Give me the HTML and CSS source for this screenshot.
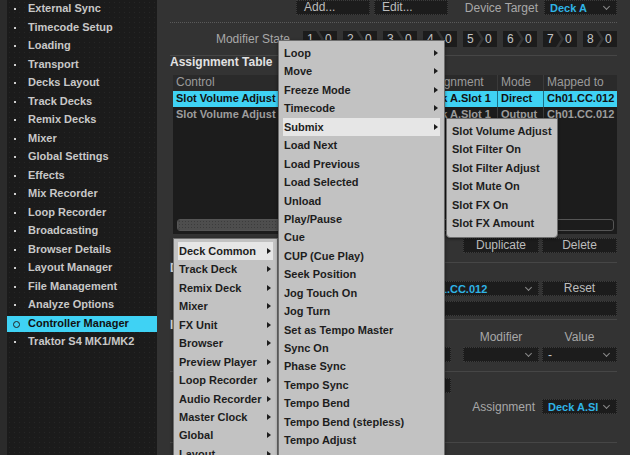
FILE: index.html
```html
<!DOCTYPE html>
<html>
<head>
    <title>Preferences - Controller Manager</title>
    <link rel="stylesheet" href="styles.css">
</head>
<body>
    <div class="app">
        <div class="edge"></div>
        <nav class="sidebar">
            <ul>
                <li>External Sync</li>
                <li>Timecode Setup</li>
                <li>Loading</li>
                <li>Transport</li>
                <li>Decks Layout</li>
                <li>Track Decks</li>
                <li>Remix Decks</li>
                <li>Mixer</li>
                <li>Global Settings</li>
                <li>Effects</li>
                <li>Mix Recorder</li>
                <li>Loop Recorder</li>
                <li>Broadcasting</li>
                <li>Browser Details</li>
                <li>Layout Manager</li>
                <li>File Management</li>
                <li>Analyze Options</li>
                <li class="active">Controller Manager</li>
                <li>Traktor S4 MK1/MK2</li>
            </ul>
        </nav>

        <main class="panel">
            <div class="top-row">
                <button class="btn btn-top">Add...</button>
                <button class="btn btn-top">Edit...</button>
                <span class="field-label device-label">Device Target</span>
                <div class="dropdown col-b"><span class="cyan">Deck A</span><span class="chev"></span></div>
            </div>
            <div class="dotted"></div>

            <div class="mod-row">
                <span class="field-label mod-label">Modifier State</span>
                <div class="mod-boxes">
                    <div class="mod"><span class="mod-num">1</span><span class="mod-val">0</span></div>
                    <div class="mod"><span class="mod-num">2</span><span class="mod-val">0</span></div>
                    <div class="mod"><span class="mod-num">3</span><span class="mod-val">0</span></div>
                    <div class="mod"><span class="mod-num">4</span><span class="mod-val">0</span></div>
                    <div class="mod"><span class="mod-num">5</span><span class="mod-val">0</span></div>
                    <div class="mod"><span class="mod-num">6</span><span class="mod-val">0</span></div>
                    <div class="mod"><span class="mod-num">7</span><span class="mod-val">0</span></div>
                    <div class="mod"><span class="mod-num">8</span><span class="mod-val">0</span></div>
                </div>
            </div>
            <div class="rule"></div>

            <h4 class="section-title">Assignment Table</h4>
            <div class="table">
                <div class="tr th">
                    <span class="c-control">Control</span>
                    <span class="c-assign">Assignment</span>
                    <span class="c-mode">Mode</span>
                    <span class="c-map">Mapped to</span>
                </div>
                <div class="tr selected">
                    <span class="c-control">Slot Volume Adjust</span>
                    <span class="c-assign">Deck A.Slot 1</span>
                    <span class="c-mode">Direct</span>
                    <span class="c-map">Ch01.CC.012</span>
                </div>
                <div class="tr">
                    <span class="c-control">Slot Volume Adjust</span>
                    <span class="c-assign">Deck A.Slot 1</span>
                    <span class="c-mode">Output</span>
                    <span class="c-map">Ch01.CC.012</span>
                </div>
                <div class="table-fill"></div>
                <div class="scrollbar"><div class="thumb"></div></div>
            </div>

            <div class="right-row btn-row">
                <button class="btn col-a">Duplicate</button>
                <button class="btn col-b">Delete</button>
            </div>
            <div class="rule rule-2"></div>

            <div class="sub-title">D</div>
            <div class="right-row learn-row">
                <div class="dropdown learn-dd"><span class="cyan">Ch01.CC.012</span><span class="chev"></span></div>
                <button class="btn col-b">Reset</button>
            </div>
            <div class="right-row">
                <div class="dark-bar"></div>
            </div>
            <div class="rule rule-3"></div>

            <div class="sub-title sub-title-2">I</div>
            <div class="right-row label-row">
                <span class="col-a center">Modifier</span>
                <span class="col-b center">Value</span>
            </div>
            <div class="right-row dd-row">
                <div class="dropdown part-box"><span class="chev"></span></div>
                <div class="dropdown col-a"><span></span><span class="chev"></span></div>
                <div class="dropdown col-b"><span class="dash">-</span><span class="chev"></span></div>
            </div>
            <div class="rule rule-4"></div>

            <div class="right-row small-row">
                <div class="dropdown part-box"></div>
            </div>
            <div class="right-row assign-row">
                <div class="dropdown part-box"></div>
                <span class="field-label assign-label">Assignment</span>
                <div class="dropdown col-b"><span class="cyan">Deck A.Sl</span><span class="chev"></span></div>
            </div>
            <div class="rule rule-5"></div>
        </main>
    </div>

    <!-- context menus opened over the panel -->
    <ul class="menu menu-class">
        <li class="hl arrow">Deck Common</li>
        <li class="arrow">Track Deck</li>
        <li class="arrow">Remix Deck</li>
        <li class="arrow">Mixer</li>
        <li class="arrow">FX Unit</li>
        <li class="arrow">Browser</li>
        <li class="arrow">Preview Player</li>
        <li class="arrow">Loop Recorder</li>
        <li class="arrow">Audio Recorder</li>
        <li class="arrow">Master Clock</li>
        <li class="arrow">Global</li>
        <li class="arrow">Layout</li>
    </ul>

    <ul class="menu menu-deck">
        <li class="arrow">Loop</li>
        <li class="arrow">Move</li>
        <li class="arrow">Freeze Mode</li>
        <li class="arrow">Timecode</li>
        <li class="hl arrow">Submix</li>
        <li>Load Next</li>
        <li>Load Previous</li>
        <li>Load Selected</li>
        <li>Unload</li>
        <li>Play/Pause</li>
        <li>Cue</li>
        <li>CUP (Cue Play)</li>
        <li>Seek Position</li>
        <li>Jog Touch On</li>
        <li>Jog Turn</li>
        <li>Set as Tempo Master</li>
        <li>Sync On</li>
        <li>Phase Sync</li>
        <li>Tempo Sync</li>
        <li>Tempo Bend</li>
        <li>Tempo Bend (stepless)</li>
        <li>Tempo Adjust</li>
    </ul>

    <ul class="menu menu-submix">
        <li>Slot Volume Adjust</li>
        <li>Slot Filter On</li>
        <li>Slot Filter Adjust</li>
        <li>Slot Mute On</li>
        <li>Slot FX On</li>
        <li>Slot FX Amount</li>
    </ul>
</body>
</html>
```

FILE: styles.css
```css
:root {
    --edge: #2b2b2b;
    --sidebar: #1b1b1b;
    --panel: #333333;
    --control: #1c1c1c;
    --control-border: #3c3c3c;
    --text: #c8c8c8;
    --label: #a8a8a8;
    --cyan: #3fd2f4;
    --cyan-text: #2fb4e6;
    --menu-bg: #c2c2c2;
    --menu-hl: #e6e6e6;
    --menu-text: #1d1d1d;
}

* {
    box-sizing: border-box;
}

html, body {
    overflow: hidden;
}

body {
    position: relative;
    margin: 0;
    width: 630px;
    height: 455px;
    font-family: 'Liberation Sans', Arial, sans-serif;
    background: var(--panel);
}

ul {
    list-style: none;
    margin: 0;
    padding: 0;
}

button {
    font-family: inherit;
}

.app {
    display: flex;
    height: 455px;
}

.edge {
    width: 7px;
    background: var(--edge);
}

/* Sidebar */
.sidebar {
    width: 150px;
    background-color: var(--sidebar);
    background-image: radial-gradient(#262626 0.6px, transparent 0.7px);
    background-size: 5px 5px;
}

.sidebar li {
    position: relative;
    height: 18.5px;
    line-height: 15.5px;
    padding-left: 21px;
    border-top: 1.5px solid transparent;
    border-bottom: 1.5px solid transparent;
    background-clip: padding-box;
    font-size: 11px;
    font-weight: bold;
    color: var(--text);
    white-space: nowrap;
}

.sidebar li::before {
    content: "";
    position: absolute;
    left: 7px;
    top: 7px;
    width: 2px;
    height: 2px;
    background: #cfcfcf;
}

.sidebar li.active {
    background-color: var(--cyan);
    color: #111;
}

.sidebar li.active::before {
    left: 6px;
    top: 5.5px;
    width: 5px;
    height: 5px;
    border: 1.3px solid #222;
    border-radius: 50%;
    background: transparent;
}

/* Main panel */
.panel {
    flex: 1;
    padding: 0 13px 0 13px;
    background: var(--panel);
    color: var(--text);
}

.btn {
    height: 15px;
    padding: 0 6px;
    border: 1px dotted var(--control-border);
    background: var(--control);
    color: #bdbdbd;
    font-size: 12px;
    line-height: 13px;
    text-align: center;
}

.field-label {
    font-size: 12px;
    color: var(--label);
    white-space: nowrap;
}

.cyan {
    color: var(--cyan-text);
    font-weight: bold;
    font-size: 11px;
}

.dropdown {
    display: flex;
    align-items: center;
    justify-content: space-between;
    height: 15px;
    padding: 0 5px 0 5px;
    border: 1px dotted var(--control-border);
    background: var(--control);
    overflow: hidden;
    white-space: nowrap;
}

.chev {
    flex: none;
    width: 5px;
    height: 5px;
    margin: 0 2px 3px 4px;
    border-right: 1.2px solid #8a8a8a;
    border-bottom: 1.2px solid #8a8a8a;
    transform: rotate(45deg);
}

.col-a {
    width: 76px;
}

.col-b {
    width: 75px;
    margin-left: 3px;
}

.center {
    text-align: center;
}

.top-row {
    display: flex;
    justify-content: flex-end;
    align-items: center;
    height: 15px;
}

.btn-top {
    width: 74px;
    margin-left: 4px;
    text-align: left;
    padding-left: 7px;
}

.device-label {
    width: 92px;
    text-align: right;
    padding-right: 2px;
}

.top-row .dropdown {
    margin-left: 4px;
    width: 73px;
}

.dotted {
    margin-top: 7px;
    border-top: 1px dotted #5a5a5a;
}

.mod-row {
    display: flex;
    align-items: center;
    height: 16px;
    margin-top: 8px;
}

.mod-label {
    width: 120px;
    text-align: right;
}

.mod-boxes {
    display: flex;
    gap: 6px;
    margin-left: 13px;
}

.mod {
    display: flex;
    width: 34px;
    height: 16px;
    font-size: 12px;
    line-height: 16px;
    color: #c4c4c4;
}

.mod-num {
    width: 18px;
    padding-left: 4px;
    background: var(--control);
    clip-path: polygon(0 0, 13px 0, 18px 50%, 13px 100%, 0 100%);
}

.mod-val {
    width: 18px;
    margin-left: -2px;
    padding-left: 6px;
    background: var(--control);
    clip-path: polygon(0 0, 100% 0, 100% 100%, 0 100%, 5px 50%);
}

.rule {
    margin-top: 8px;
    border-top: 1px solid #464646;
}

.section-title {
    margin: 0 0 6px 0;
    height: 13px;
    line-height: 13px;
    font-size: 12px;
    font-weight: bold;
    color: #e2e2e2;
}

/* Assignment table */
.table {
    display: flex;
    flex-direction: column;
    height: 159px;
    margin-left: 3px;
    background: var(--control);
    font-size: 11px;
    font-weight: bold;
}

.tr {
    display: flex;
    height: 15.5px;
    line-height: 15px;
    color: #9c9c9c;
}

.tr span {
    padding-left: 3px;
    overflow: hidden;
    white-space: nowrap;
    border-right: 1px solid #3a3a3a;
}

.tr span:last-child {
    border-right: none;
}

.th {
    background: #2a2a2a;
    color: #9a9a9a;
    font-weight: normal;
    font-size: 12px;
    height: 16px;
}

.tr.selected {
    background: var(--cyan);
    color: #111;
}

.tr.selected span {
    border-right-color: #1c6f86;
}

.c-control {
    width: 245px;
}

.c-assign {
    width: 80px;
}

.c-mode {
    width: 46px;
}

.c-map {
    flex: 1;
}

.table-fill {
    flex: 1;
}

.scrollbar {
    height: 12px;
    margin: 0 3px 3px 4px;
    border: 1px solid #555;
    border-radius: 3px;
}

.thumb {
    width: 60%;
    height: 100%;
    background-color: #4e4e4e;
    background-image: radial-gradient(#3c3c3c 0.6px, transparent 0.7px);
    background-size: 3px 3px;
    border-radius: 2px;
}

.right-row {
    display: flex;
    justify-content: flex-end;
    align-items: center;
    height: 15px;
}

.btn-row {
    margin-top: 4px;
}

.rule-2 {
    margin-top: 9px;
}

.sub-title {
    height: 11px;
    line-height: 11px;
    font-size: 12px;
    font-weight: bold;
    color: #e2e2e2;
}

.learn-row {
    margin-top: 7px;
}

.learn-dd {
    width: 125px;
}

.dark-bar {
    width: 250px;
    height: 15px;
    margin-top: 10px;
    border: 1px dotted var(--control-border);
    background: var(--control);
}

.rule-3 {
    margin-top: 8px;
}

.label-row {
    height: 12px;
    font-size: 12px;
    color: var(--label);
    align-items: center;
}

.dd-row {
    margin-top: 4px;
}

.part-box {
    width: 70px;
    margin-right: 12px;
}

.dash {
    color: #c8c8c8;
    font-size: 12px;
}

.rule-4 {
    margin-top: 9px;
}

.small-row {
    margin-top: 6px;
    justify-content: flex-start;
}

.small-row .part-box {
    margin-left: 211px;
}

.assign-row {
    margin-top: 6px;
}

.assign-row .part-box {
    margin-right: 20px;
}

.assign-label {
    width: 87px;
    text-align: right;
    margin-right: 4px;
}

.rule-5 {
    margin-top: 28px;
}

/* Context menus */
.menu {
    position: absolute;
    overflow: hidden;
    padding: 3px 4px 4px 4px;
    background: var(--menu-bg);
    border: 1px solid #6d6d6d;
    box-shadow: 0 1px 3px rgba(0, 0, 0, 0.5);
    font-size: 11px;
    font-weight: bold;
    color: var(--menu-text);
}

.menu li {
    position: relative;
    height: 18.45px;
    line-height: 18.45px;
    padding-left: 1px;
    white-space: nowrap;
}

.menu li.hl {
    background: var(--menu-hl);
}

.menu li.arrow::after {
    content: "";
    position: absolute;
    right: 2px;
    top: 6px;
    border-left: 4px solid #1d1d1d;
    border-top: 3px solid transparent;
    border-bottom: 3px solid transparent;
}

.menu-class {
    left: 173px;
    top: 238px;
    width: 105px;
    height: 217px;
    border-bottom: none;
}

.menu-deck {
    left: 278px;
    top: 40px;
    width: 167px;
    height: 415px;
    border-bottom: none;
}

.menu-submix {
    left: 446px;
    top: 118px;
    width: 112px;
    border-radius: 0 0 4px 4px;
}
```
